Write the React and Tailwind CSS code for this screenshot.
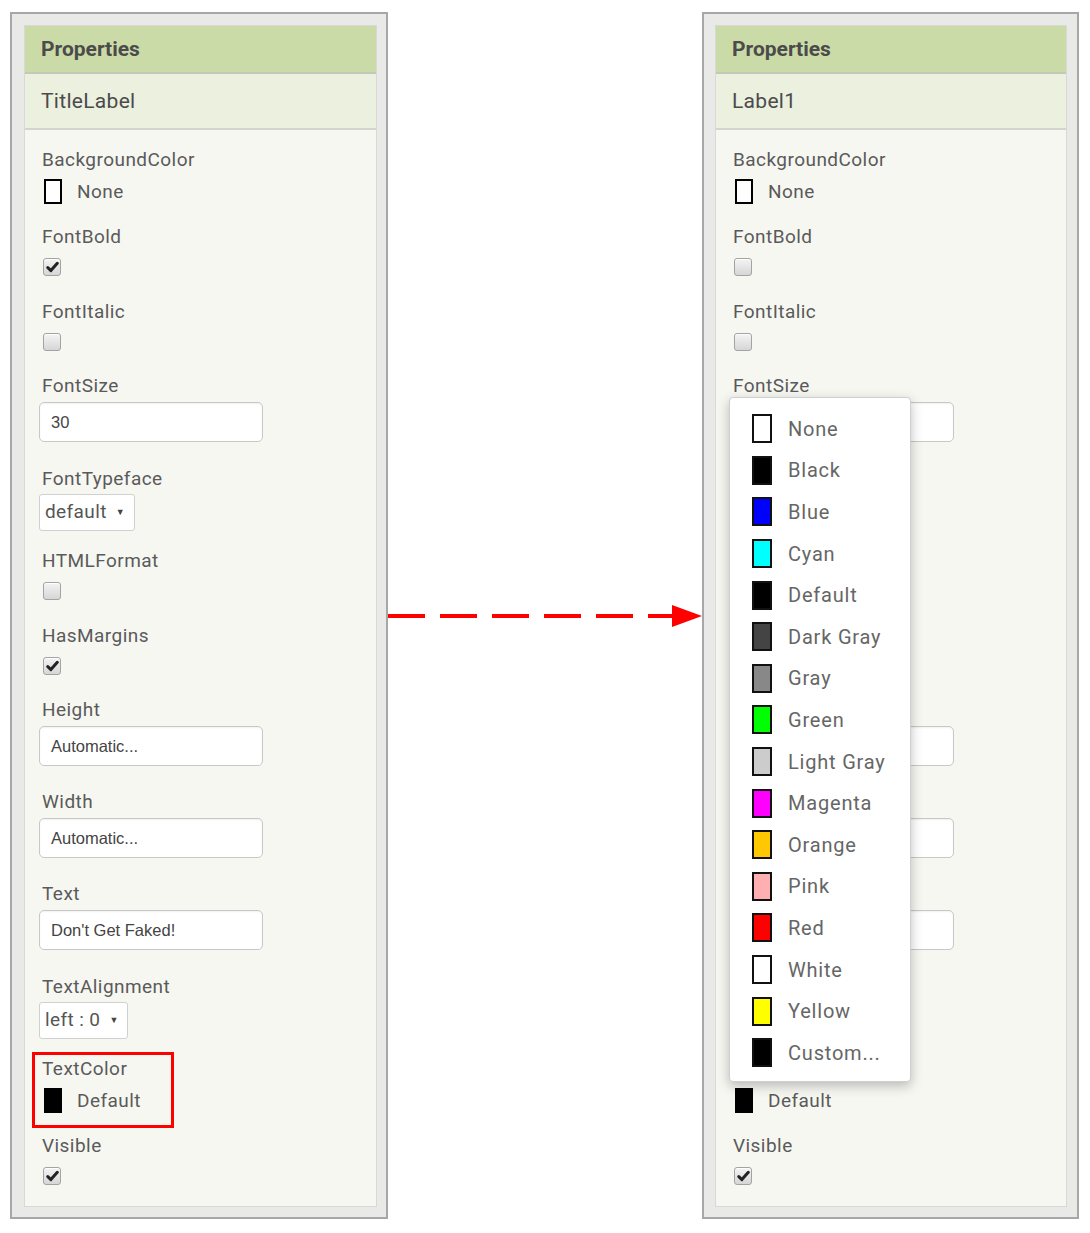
import React from 'react'

const FONT = { fontFamily: 'Roboto, "Noto Sans", sans-serif' }

const leftProps = [
  { label: 'BackgroundColor', type: 'color', value: 'None', swatch: 'bg-white', h: 'h-[77px]' },
  { label: 'FontBold', type: 'check', checked: true, h: 'h-[75px]' },
  { label: 'FontItalic', type: 'check', checked: false, h: 'h-[74px]' },
  { label: 'FontSize', type: 'input', value: '30', h: 'h-[93px]' },
  { label: 'FontTypeface', type: 'select', value: 'default', w: 'w-[96px]', h: 'h-[82px]' },
  { label: 'HTMLFormat', type: 'check', checked: false, h: 'h-[75px]' },
  { label: 'HasMargins', type: 'check', checked: true, h: 'h-[74px]' },
  { label: 'Height', type: 'input', value: 'Automatic...', h: 'h-[92px]' },
  { label: 'Width', type: 'input', value: 'Automatic...', h: 'h-[92px]' },
  { label: 'Text', type: 'input', value: "Don't Get Faked!", h: 'h-[93px]' },
  { label: 'TextAlignment', type: 'select', value: 'left : 0', w: 'w-[89px]', h: 'h-[82px]' },
  { label: 'TextColor', type: 'color', value: 'Default', swatch: 'bg-black', h: 'h-[77px]', mark: true },
  { label: 'Visible', type: 'check', checked: true, h: 'h-[60px]' },
]

// labels that sit under the open colour menu on the right
const covered = ['FontTypeface', 'HTMLFormat', 'HasMargins', 'Height', 'Width', 'Text', 'TextAlignment', 'TextColor']

const rightProps = leftProps.map(p => {
  let q = { ...p, mark: false, hide: covered.includes(p.label) }
  if (p.label === 'FontBold') q.checked = false
  if (p.label === 'Text') q.value = 'Text for Label1'
  if (p.label === 'TextColor') q.hideLabelOnly = true
  return q
})

const colors = [
  { name: 'None', cls: 'bg-white' },
  { name: 'Black', cls: 'bg-black' },
  { name: 'Blue', cls: 'bg-[#0000ff]' },
  { name: 'Cyan', cls: 'bg-[#00ffff]' },
  { name: 'Default', cls: 'bg-black' },
  { name: 'Dark Gray', cls: 'bg-[#444444]' },
  { name: 'Gray', cls: 'bg-[#888888]' },
  { name: 'Green', cls: 'bg-[#00ff00]' },
  { name: 'Light Gray', cls: 'bg-[#cccccc]' },
  { name: 'Magenta', cls: 'bg-[#ff00ff]' },
  { name: 'Orange', cls: 'bg-[#ffc800]' },
  { name: 'Pink', cls: 'bg-[#ffafaf]' },
  { name: 'Red', cls: 'bg-[#ff0000]' },
  { name: 'White', cls: 'bg-white' },
  { name: 'Yellow', cls: 'bg-[#ffff00]' },
  { name: 'Custom...', cls: 'bg-black' },
]

function Checkbox({ checked }) {
  return (
    <div className="mt-[9px] ml-[1px] w-[18px] h-[18px] rounded-[3px] border border-[#a3a3a3] bg-gradient-to-b from-[#f4f4f4] to-[#d6d6d6] shadow-[inset_0_1px_0_#fff] flex items-center justify-center">
      {checked && (
        <svg width="13" height="12" viewBox="0 0 13 12">
          <path d="M1.8 6.6 L4.9 9.6 L11.3 2.3" fill="none" stroke="#222" strokeWidth="3" strokeLinecap="round" strokeLinejoin="round" />
        </svg>
      )}
    </div>
  )
}

function Property({ p }) {
  const textHidden = p.hide && !p.hideLabelOnly
  return (
    <div className={`relative ${p.h}`}>
      {p.mark && (
        <div className="absolute left-[-10px] top-[-5px] w-[142px] h-[76px] border-[3px] border-[#ff0000]" />
      )}
      <div className={`text-[19px] leading-[24px] tracking-[0.45px] text-[#5a5a5a] ${p.hide ? 'invisible' : ''}`}>{p.label}</div>
      {p.type === 'color' && (
        <div className="mt-[7px] flex items-center">
          <div className={`ml-[2px] w-[18px] h-[25px] border-2 border-black ${p.swatch}`} />
          <span className={`ml-[15px] text-[19px] leading-[24px] tracking-[0.45px] text-[#5a5a5a] ${textHidden ? 'invisible' : ''}`}>{p.value}</span>
        </div>
      )}
      {p.type === 'check' && <Checkbox checked={p.checked} />}
      {p.type === 'input' && (
        <div
          className="mt-[4px] -ml-[3px] w-[224px] h-[40px] rounded-[5px] border border-[#c8c8c8] bg-white flex items-center pl-[11px] text-[16.5px] text-[#444] shadow-[inset_0_1px_2px_rgba(0,0,0,0.06)]"
          style={{ fontFamily: '"Liberation Sans", Arial, sans-serif' }}
        >
          <span className={textHidden ? 'invisible' : ''}>{p.value}</span>
        </div>
      )}
      {p.type === 'select' && (
        <div className={`mt-[3px] -ml-[3px] ${p.w} h-[37px] rounded-[3px] border border-[#d0d0d0] bg-white flex items-center pl-[5px] text-[19px] tracking-[0.4px] text-[#555]`}>
          <span className={textHidden ? 'invisible' : ''}>{p.value}</span>
          <span className={`ml-[9px] text-[9px] text-[#444] ${textHidden ? 'invisible' : ''}`}>▼</span>
        </div>
      )}
    </div>
  )
}

function Panel({ title, props, outerW, innerW, pl, pr, children }) {
  return (
    <div className={`relative ${outerW} h-[1207px] border-2 border-[#a7a7a7] bg-[#e9e9e7] ${pl} ${pr} pt-[11px] pb-[10px] flex flex-col`}>
      <div className={`${innerW} flex-1 flex flex-col border border-[#d8d8d4] bg-[#f7f7f2]`}>
        <div className="h-[48px] shrink-0 bg-[#cbdba7] border-b-2 border-[#c4c7bb] flex items-center pl-[16px] pt-[1px] text-[21px] font-bold text-[#4b4b4b]">
          Properties
        </div>
        <div className="h-[56px] shrink-0 bg-[#ebf0df] border-b-2 border-[#d3d5cc] flex items-center pl-[16px] pt-[2px] text-[21px] tracking-[0.3px] text-[#4b4b4b]">
          {title}
        </div>
        <div className="pt-[18px] pl-[17px]">
          {props.map(p => <Property key={p.label} p={p} />)}
        </div>
      </div>
      {children}
    </div>
  )
}

function ColorMenu() {
  return (
    <div className="absolute left-[25px] top-[383px] w-[182px] h-[685px] bg-white border border-[#cfcfcf] rounded-[4px] shadow-[0_4px_12px_rgba(0,0,0,0.25)] pt-[10px]">
      {colors.map(c => (
        <div key={c.name} className="h-[41.6px] flex items-center pl-[22px]">
          <div className={`w-[20px] h-[29px] border-2 border-[#111] ${c.cls}`} />
          <span className="ml-[16px] text-[20px] tracking-[0.8px] text-[#666]">{c.name}</span>
        </div>
      ))}
    </div>
  )
}

export default function App() {
  return (
    <div className="w-[1090px] h-[1233px] bg-white pl-[10px] pt-[12px] flex items-start" style={FONT}>
      <Panel title="TitleLabel" props={leftProps} outerW="w-[378px]" innerW="w-[353px]" pl="pl-[12px]" pr="pr-[9px]" />

      {/* arrow */}
      <div className="w-[314px] h-[1207px] flex items-center">
        <svg width="314" height="24" viewBox="0 0 314 24">
          <line x1="0" y1="12" x2="287" y2="12" stroke="#ff0000" strokeWidth="4" strokeDasharray="37 15" />
          <polygon points="284,1 314,12 284,23" fill="#ff0000" />
        </svg>
      </div>

      <Panel title="Label1" props={rightProps} outerW="w-[377px]" innerW="w-[352px]" pl="pl-[11px]" pr="pr-[10px]">
        <ColorMenu />
      </Panel>
    </div>
  )
}
